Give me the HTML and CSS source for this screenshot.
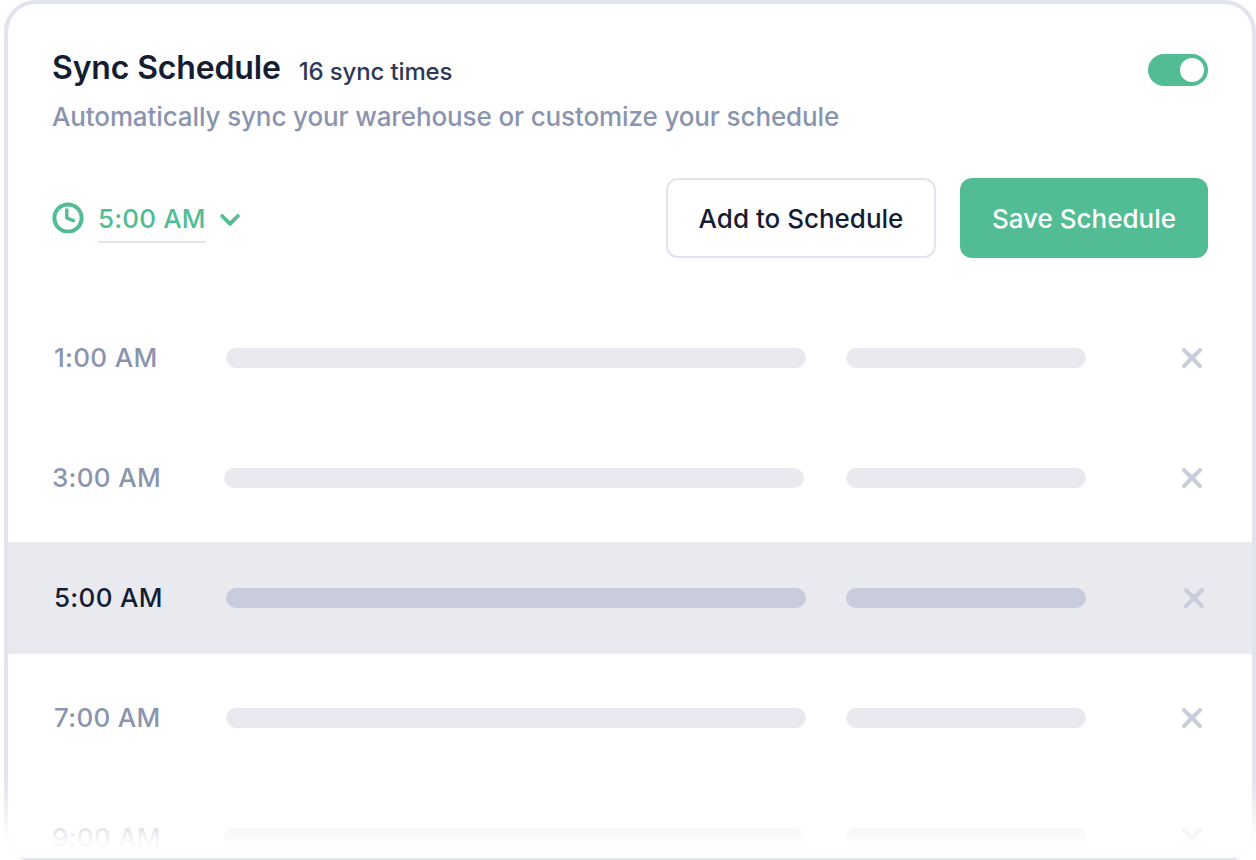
FILE: index.html
```html
<!DOCTYPE html>
<html lang="en">
<head>
	<meta charset="UTF-8">
	<title>Sync Schedule</title>
	<link rel="stylesheet" href="styles.css">
</head>
<body>
	<div class="card">
		<div class="head">
			<div class="head-text">
				<div class="title-line">
					<h1 class="title">Sync Schedule</h1>
					<span class="count">16 sync times</span>
				</div>
				<p class="desc">Automatically sync your warehouse or customize your schedule</p>
			</div>
			<div class="toggle"><span class="knob"></span></div>
		</div>

		<div class="controls">
			<svg class="clock" width="32" height="32" viewBox="0 0 32 32" fill="none">
				<circle cx="16" cy="16" r="13.6" stroke="#52bd94" stroke-width="4"/>
				<path d="M14.8 8V16L21.5 18.6" stroke="#52bd94" stroke-width="3.4" stroke-linecap="round" stroke-linejoin="round"/>
			</svg>
			<span class="time-pick">5:00 AM</span>
			<svg class="chevron" width="20" height="12" viewBox="0 0 20 12" fill="none">
				<path d="M2.2 2L10 9.8L17.8 2" stroke="#52bd94" stroke-width="3.8" stroke-linecap="round" stroke-linejoin="round"/>
			</svg>
			<div class="buttons">
				<button class="btn btn-line">Add to Schedule</button>
				<button class="btn btn-green">Save Schedule</button>
			</div>
		</div>

		<div class="rows">
			<div class="row">
				<span class="time">1:00 AM</span>
				<span class="bar bar-long"></span>
				<span class="bar bar-short"></span>
				<svg class="close" width="24" height="24" viewBox="0 0 24 24"><path d="M4 4L20 20M20 4L4 20"/></svg>
			</div>
			<div class="row row-shift">
				<span class="time">3:00 AM</span>
				<span class="bar bar-long"></span>
				<span class="bar bar-short"></span>
				<svg class="close" width="24" height="24" viewBox="0 0 24 24"><path d="M4 4L20 20M20 4L4 20"/></svg>
			</div>
			<div class="row row-active">
				<span class="time">5:00 AM</span>
				<span class="bar bar-long"></span>
				<span class="bar bar-short"></span>
				<svg class="close" width="24" height="24" viewBox="0 0 24 24"><path d="M4 4L20 20M20 4L4 20"/></svg>
			</div>
			<div class="row">
				<span class="time">7:00 AM</span>
				<span class="bar bar-long"></span>
				<span class="bar bar-short"></span>
				<svg class="close" width="24" height="24" viewBox="0 0 24 24"><path d="M4 4L20 20M20 4L4 20"/></svg>
			</div>
			<div class="row row-shift row-last">
				<span class="time">9:00 AM</span>
				<span class="bar bar-long"></span>
				<span class="bar bar-short"></span>
				<svg class="close" width="24" height="24" viewBox="0 0 24 24"><path d="M4 4L20 20M20 4L4 20"/></svg>
			</div>
		</div>

		<div class="fade"></div>
	</div>
</body>
</html>
```

FILE: styles.css
```css
html, body{
	margin: 0;
	height: 860px;
	background: #fff;
	overflow: hidden;
}
body{
	padding-left: 4px;
	box-sizing: border-box;
	font-family: "Inter", "Liberation Sans", sans-serif;
	color: #101840;
}
/* card runs a little past the bottom of the window, only 2px of its border shows */
.card{
	position: relative;
	display: flex;
	flex-direction: column;
	box-sizing: border-box;
	width: 1252px;
	height: 862px;
	border: 4px solid #e1e4ec;
	border-radius: 32px;
	background: #fff;
}

/* header */
.head{
	display: flex;
	justify-content: space-between;
	align-items: flex-start;
	padding: 44px 44px 0 44px;
}
.title-line{
	display: flex;
	align-items: flex-start;
	gap: 18px;
}
.title{
	margin: 0;
	font-size: 32px;
	line-height: 40px;
	font-weight: 600;
	letter-spacing: -0.15px;
	color: #141d33;
}
.count{
	margin-top: 8px;
	font-size: 24px;
	line-height: 32px;
	font-weight: 500;
	letter-spacing: -0.15px;
	color: #2d3856;
}
.desc{
	margin: 13px 0 0;
	font-size: 26px;
	line-height: 32px;
	font-weight: 500;
	letter-spacing: -0.12px;
	color: #8a94ae;
}
.toggle{
	display: flex;
	justify-content: flex-end;
	align-items: center;
	box-sizing: border-box;
	width: 60px;
	height: 32px;
	margin-top: 6px;
	padding-right: 4px;
	border-radius: 16px;
	background: #52bd94;
}
.knob{
	width: 24px;
	height: 24px;
	border-radius: 50%;
	background: #fff;
}

/* time picker + buttons */
.controls{
	display: flex;
	align-items: center;
	padding: 45px 44px 0 44px;
}
.clock{
	flex: none;
}
.time-pick{
	margin: 10px 0 0 14px;
	padding: 0 0 6px;
	border-bottom: 2px solid #e1e4ec;
	font-size: 26px;
	line-height: 32px;
	font-weight: 500;
	letter-spacing: 0.15px;
	color: #52bd94;
}
.chevron{
	flex: none;
	margin: 4px 0 0 14px;
}
.buttons{
	display: flex;
	gap: 24px;
	margin-left: auto;
}
.btn{
	box-sizing: border-box;
	height: 80px;
	border-radius: 12px;
	font-family: inherit;
	font-size: 26px;
	font-weight: 500;
}
.btn-line{
	width: 270px;
	border: 2px solid #e1e4ec;
	background: #fff;
	color: #141d33;
}
.btn-green{
	width: 248px;
	border: 0;
	background: #52bd94;
	color: #fff;
}

/* list */
.rows{
	display: flex;
	flex-direction: column;
	flex: 1;
	min-height: 0;
	gap: 8px;
	margin-top: 44px;
	overflow: hidden;
}
.row{
	display: flex;
	align-items: center;
	flex: none;
	height: 112px;
	padding-left: 46px;
}
.time{
	width: 172px;
	flex: none;
	margin-bottom: 2px;
	font-size: 26px;
	font-weight: 500;
	letter-spacing: 0.3px;
	color: #8a94ae;
}
.bar{
	flex: none;
	height: 20px;
	border-radius: 10px;
	background: #e9eaf0;
}
.bar-long{
	width: 580px;
	margin-right: 40px;
}
.bar-short{
	width: 240px;
	margin-right: 94px;
}
.close{
	flex: none;
	fill: none;
	stroke: #c9ccda;
	stroke-width: 4;
	stroke-linecap: round;
}
.row-shift{
	padding-left: 44px;
}
.row-shift .bar-long{
	margin-right: 42px;
}
.row-active{
	background: #e9eaf0;
}
.row-active .time{
	color: #141d33;
}
.row-active .bar{
	background: #c9ccda;
}
.row-active .bar-short{
	margin-right: 96px;
}
/* darker under the fade so the bars don't vanish */
.row-last .bar{
	background: #dcdee7;
}

/* list and side borders fade out, bottom border stays on top */
.fade{
	position: absolute;
	left: -4px;
	right: -4px;
	bottom: 0;
	height: 80px;
	background: linear-gradient(rgba(255,255,255,0), rgba(255,255,255,0.94) 80%);
}
```
